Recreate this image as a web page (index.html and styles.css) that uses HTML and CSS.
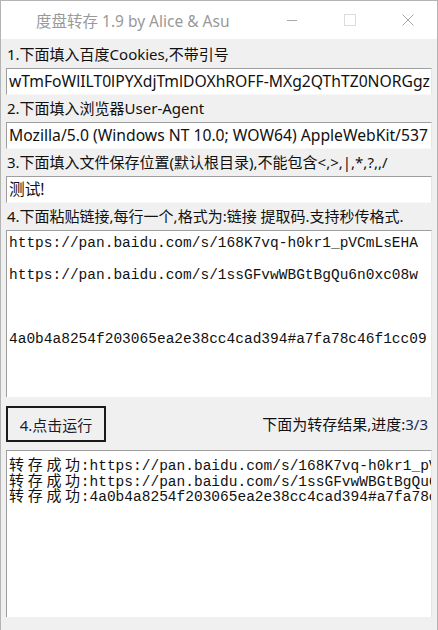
FILE: index.html
```html
<!DOCTYPE html>
<html lang="zh">
<head>
<meta charset="utf-8">
<title>度盘转存 1.9 by Alice &amp; Asu</title>
<link rel="stylesheet" href="styles.css">
</head>
<body>
<div class="window">
  <div class="titlebar">
    <div class="title">度盘转存 1.9 by Alice &amp; Asu</div>
    <div class="controls">
      <span class="ctl"><svg width="12" height="12" viewBox="0 0 12 12"><path d="M1 6.5h10" stroke="#a8a8a8" stroke-width="1"/></svg></span>
      <span class="ctl"><svg width="12" height="12" viewBox="0 0 12 12"><rect x="0.5" y="0.5" width="11" height="11" fill="none" stroke="#dcdcdc" stroke-width="1"/></svg></span>
      <span class="ctl"><svg width="12" height="12" viewBox="0 0 12 12"><path d="M0.5 0.5L11.5 11.5M11.5 0.5L0.5 11.5" stroke="#a8a8a8" stroke-width="1"/></svg></span>
    </div>
  </div>
  <div class="content">
    <div class="label">1.下面填入百度Cookies,不带引号</div>
    <div class="field">wTmFoWlILT0lPYXdjTmlDOXhROFF-MXg2QThTZ0NORGgz</div>
    <div class="label">2.下面填入浏览器User-Agent</div>
    <div class="field">Mozilla/5.0 (Windows NT 10.0; WOW64) AppleWebKit/537</div>
    <div class="label">3.下面填入文件保存位置(默认根目录),不能包含&lt;,&gt;,|,*,?,,/</div>
    <div class="field">测试!</div>
    <div class="label">4.下面粘贴链接,每行一个,格式为:链接 提取码.支持秒传格式.</div>
    <div class="area links"><div class="line">https://pan.baidu.com/s/168K7vq-h0kr1_pVCmLsEHA</div><div class="line"> </div><div class="line">https://pan.baidu.com/s/1ssGFvwWBGtBgQu6n0xc08w</div><div class="line"> </div><div class="line"> </div><div class="line"> </div><div class="line">4a0b4a8254f203065ea2e38cc4cad394#a7fa78c46f1cc09</div></div>
    <div class="runrow">
      <button class="run">4.点击运行</button>
      <div class="progress">下面为转存结果,进度:<span class="num">3/3</span></div>
    </div>
    <div class="area output"><div class="line"><span class="cjk">转存成功</span>:https://pan.baidu.com/s/168K7vq-h0kr1_pVCmLsEHA</div><div class="line"><span class="cjk">转存成功</span>:https://pan.baidu.com/s/1ssGFvwWBGtBgQu6n0xc08w</div><div class="line"><span class="cjk">转存成功</span>:4a0b4a8254f203065ea2e38cc4cad394#a7fa78c46f1cc09</div></div>
  </div>
</div>
</body>
</html>
```

FILE: styles.css
```css
* { box-sizing: border-box; }
html, body { margin: 0; padding: 0; }
body {
  width: 438px;
  height: 630px;
  overflow: hidden;
  background: #f0f0f0;
  font-family: "Noto Sans", "Noto Sans CJK SC", sans-serif;
}
.window {
  width: 438px;
  height: 630px;
  border: 1px solid #b4b4b4;
  border-bottom: none;
  background: #f0f0f0;
  display: flex;
  flex-direction: column;
}
.titlebar {
  height: 38px;
  background: #ffffff;
  display: flex;
  align-items: center;
  justify-content: space-between;
  flex-shrink: 0;
}
.title {
  padding-left: 35px;
  font-size: 15.5px;
  color: #999999;
  font-family: "Noto Sans", "Noto Sans CJK SC", sans-serif;
  white-space: nowrap;
}
.controls {
  display: flex;
  height: 100%;
}
.ctl {
  width: 58px;
  display: flex;
  align-items: center;
  justify-content: center;
}
.content {
  padding: 2px 5px 0 5px;
  display: flex;
  flex-direction: column;
}
.label {
  height: 27px;
  line-height: 27px;
  font-size: 15px;
  color: #111;
  white-space: nowrap;
  overflow: hidden;
  padding-left: 1px;
}
.field {
  height: 27px;
  background: #fff;
  border-top: 1px solid #9f9f9f;
  border-left: 1px solid #9f9f9f;
  border-right: 1px solid #e6e6e6;
  border-bottom: 1px solid #f8f8f8;
  font-size: 15.7px;
  line-height: 25px;
  padding-left: 2px;
  white-space: nowrap;
  overflow: hidden;
  color: #111;
}
.area {
  background: #fff;
  border-top: 1px solid #9f9f9f;
  border-left: 1px solid #9f9f9f;
  border-right: 1px solid #e6e6e6;
  font-family: "Liberation Mono", "Noto Sans CJK SC", monospace;
  font-size: 14.5px;
  color: #111;
  overflow: hidden;
  white-space: pre;
}
.links {
  height: 167px;
  padding: 4px 0 0 2px;
  line-height: 16px;
}
.line { height: 1em; }
.links .line { height: 16px; }
.runrow {
  display: flex;
  align-items: center;
  justify-content: space-between;
  height: 53px;
  padding: 0 4px 0 0;
}
.run {
  width: 100px;
  height: 36px;
  border: 2px solid #1a1a1a;
  background: #f0f0f0;
  font-family: "Noto Sans", "Noto Sans CJK SC", sans-serif;
  font-size: 15px;
  color: #1b1b2b;
  padding: 0;
  margin-top: 1px;
}
.progress {
  font-size: 15px;
  color: #111;
  white-space: nowrap;
}
.num { color: #1f2b4a; }
.output {
  height: 167px;
  padding: 5px 0 0 2px;
  line-height: 15.5px;
}
.output .line { height: 15.5px; }
.cjk {
  font-family: "Noto Sans CJK SC", sans-serif;
  font-size: 15px;
  line-height: 15.5px;
  letter-spacing: 3.7px;
  margin-right: -3px;
}
```
